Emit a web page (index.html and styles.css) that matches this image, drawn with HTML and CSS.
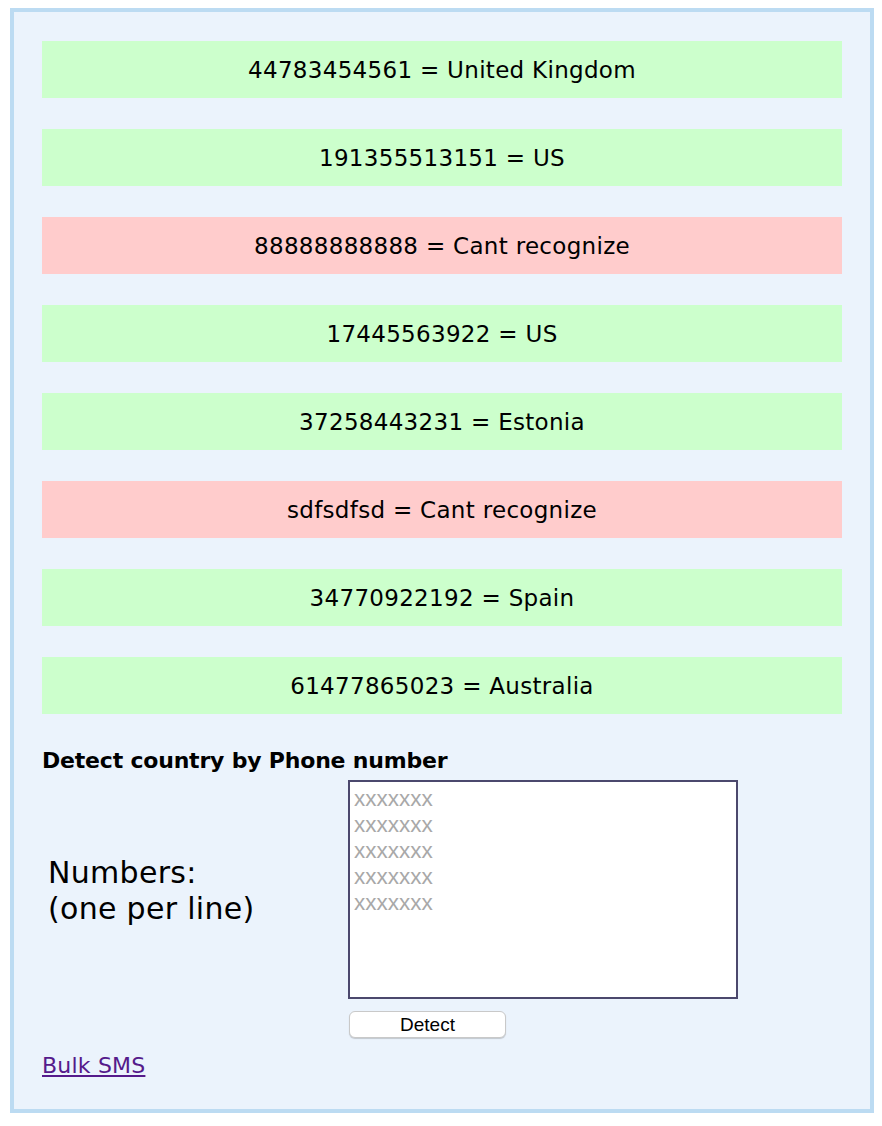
FILE: index.html
```html
<!DOCTYPE html>
<html>
<head>
<meta charset="utf-8">
<title>Detect country by Phone number</title>
<link rel="stylesheet" href="styles.css">
</head>
<body>
<div class="panel">
  <div class="results">
    <div class="result ok">44783454561 = United Kingdom</div>
    <div class="result ok">191355513151 = US</div>
    <div class="result bad">88888888888 = Cant recognize</div>
    <div class="result ok">17445563922 = US</div>
    <div class="result ok">37258443231 = Estonia</div>
    <div class="result bad">sdfsdfsd = Cant recognize</div>
    <div class="result ok">34770922192 = Spain</div>
    <div class="result ok">61477865023 = Australia</div>
  </div>
  <h2 class="title">Detect country by Phone number</h2>
  <form class="form">
    <div class="label">Numbers:<br>(one per line)</div>
    <div class="field">
      <textarea class="numbers" placeholder="xxxxxxx&#10;xxxxxxx&#10;xxxxxxx&#10;xxxxxxx&#10;xxxxxxx"></textarea>
      <button type="button" class="detect">Detect</button>
    </div>
  </form>
  <a class="link" href="#">Bulk SMS</a>
</div>
</body>
</html>
```
FILE: styles.css
```css
html, body {
  background: #ffffff;
}
body {
  margin: 8px 8px 0 10px;
  font-family: "DejaVu Sans", sans-serif;
  color: #000;
}
.panel {
  border: 4px solid #bcdbf2;
  background: #ebf3fc;
  padding: 29px 28px 30px 28px;
}
.results {
  display: flex;
  flex-direction: column;
  gap: 31px;
}
.result {
  height: 57px;
  display: flex;
  align-items: center;
  justify-content: center;
  font-size: 23px;
  letter-spacing: 0.3px;
}
.ok { background: #ccffcc; }
.bad { background: #ffcccc; }
.title {
  margin: 34px 0 0 0;
  font-size: 22px;
  font-weight: bold;
  line-height: 25px;
  letter-spacing: -0.2px;
}
.form {
  display: grid;
  grid-template-columns: 306px auto;
  margin-top: 7px;
}
.label {
  align-self: start;
  height: 219px;
  display: flex;
  flex-direction: column;
  justify-content: center;
  padding-left: 6px;
  font-size: 30px;
  line-height: 36px;
  letter-spacing: 0.3px;
  padding-top: 2px;
  box-sizing: border-box;
}
.field {
  display: flex;
  flex-direction: column;
  align-items: flex-start;
}
.numbers {
  box-sizing: border-box;
  width: 390px;
  height: 219px;
  margin: 0;
  border: 2px solid #4b486d;
  background: #fff;
  padding: 4px 4px;
  font-family: "Liberation Sans", Arial, sans-serif;
  font-size: 22.5px;
  line-height: 26px;
  resize: none;
  outline: none;
}
.numbers::placeholder {
  color: #a8a8a8;
}
.detect {
  margin: 12px 0 0 1px;
  width: 157px;
  height: 27px;
  padding: 0;
  background: #fff;
  border: 1px solid #c9c9c9;
  border-radius: 6px;
  box-shadow: 0 1px 1px rgba(0,0,0,0.18);
  font-family: "Liberation Sans", Arial, sans-serif;
  font-size: 19px;
  color: #000;
}
.link {
  display: inline-block;
  margin-top: 15px;
  font-size: 22px;
  line-height: 26px;
  letter-spacing: 0.2px;
  color: #551a8b;
  text-decoration: underline;
}
```
